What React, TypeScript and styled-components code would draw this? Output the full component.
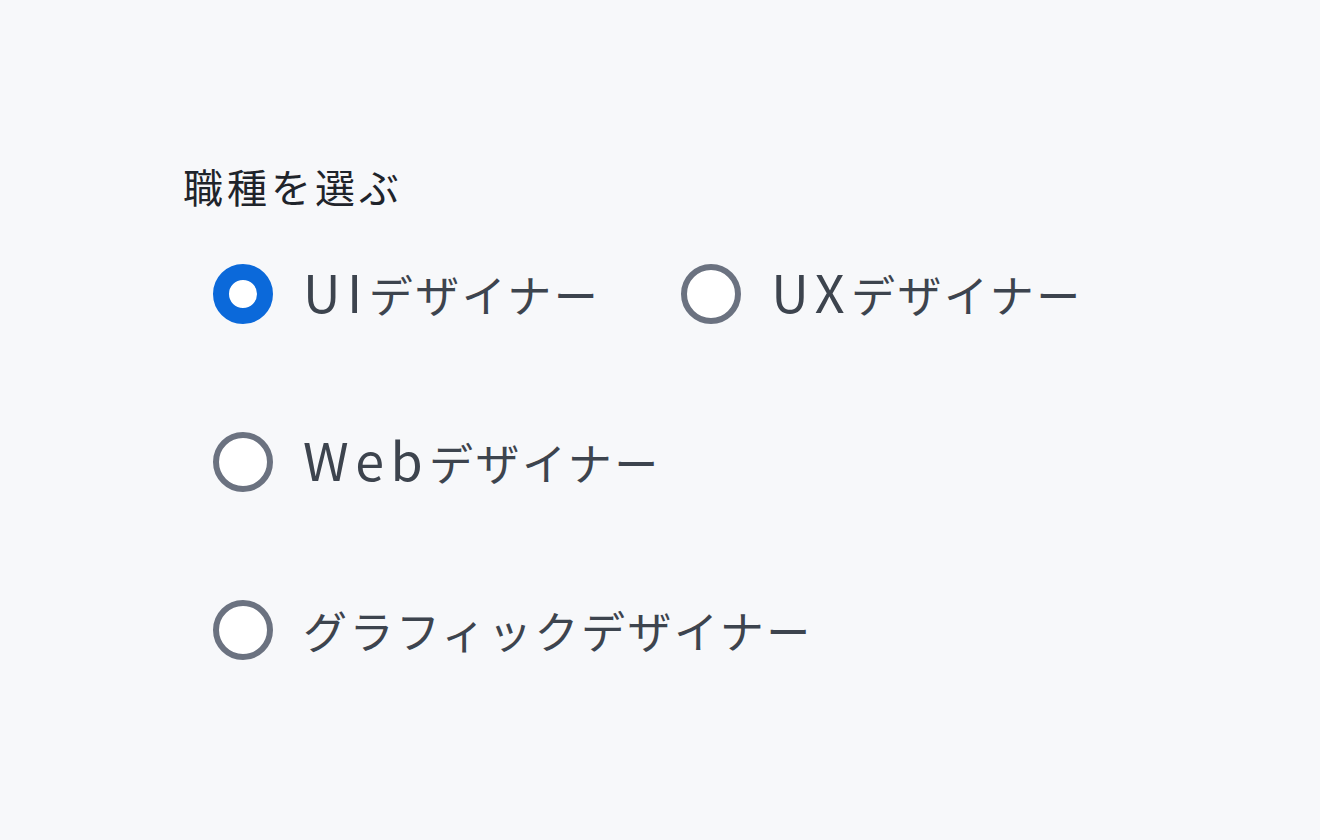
import React, { useState } from "react";
import styled, { createGlobalStyle } from "styled-components";

const GlobalStyle = createGlobalStyle`
  html, body {
    margin: 0;
    padding: 0;
    background: #f7f8fa;
  }
  body {
    font-family: "Noto Sans CJK JP", "Noto Sans", sans-serif;
  }
`;

// latin prefix + katakana part of each job title
const jobs = [
  { id: "ui", latin: "UI", kana: "デザイナー" },
  { id: "ux", latin: "UX", kana: "デザイナー" },
  { id: "web", latin: "Web", kana: "デザイナー" },
  { id: "graphic", latin: "", kana: "グラフィックデザイナー" },
];

function App() {
  const [value, setValue] = useState("ui");

  return (
    <>
      <GlobalStyle />
      <Page>
        <Fieldset>
          <Legend>職種を選ぶ</Legend>
          <Options>
            {jobs.map((job) => (
              <Option key={job.id}>
                <Radio
                  type="radio"
                  name="job"
                  value={job.id}
                  checked={value === job.id}
                  onChange={() => setValue(job.id)}
                />
                <Label>
                  {job.latin && <Latin>{job.latin}</Latin>}
                  {job.kana}
                </Label>
              </Option>
            ))}
          </Options>
        </Fieldset>
      </Page>
    </>
  );
}

export default App;

const Page = styled.main`
  min-height: 840px;
  box-sizing: border-box;
  padding: 158px 183px 0;
`;

const Fieldset = styled.fieldset`
  margin: 0;
  padding: 0;
  border: none;
  min-width: 0;
`;

const Legend = styled.legend`
  padding: 0;
  font-size: 40px;
  line-height: 56px;
  color: #1f242b;
  letter-spacing: 4px;
`;

const Options = styled.div`
  display: flex;
  flex-wrap: wrap;
  max-width: 900px;
  margin: 50px 0 0 30px;
  column-gap: 81px;
  row-gap: 108px;
`;

const Option = styled.label`
  display: flex;
  align-items: center;
  gap: 30px;
  cursor: pointer;
`;

const Radio = styled.input`
  appearance: none;
  margin: 0;
  flex: none;
  width: 60px;
  height: 60px;
  box-sizing: border-box;
  border-radius: 50%;
  border: 6px solid #6b7280;
  background: #fff;
  cursor: pointer;

  &:checked {
    border: 16px solid #0b69da;
  }
`;

const Label = styled.span`
  display: block;
  height: 60px;
  font-size: 44px;
  line-height: 60px;
  letter-spacing: 2.5px;
  color: #3d444e;
  white-space: nowrap;
`;

const Latin = styled.span`
  font-size: 52px;
  line-height: 1;
  letter-spacing: 6.5px;
`;
